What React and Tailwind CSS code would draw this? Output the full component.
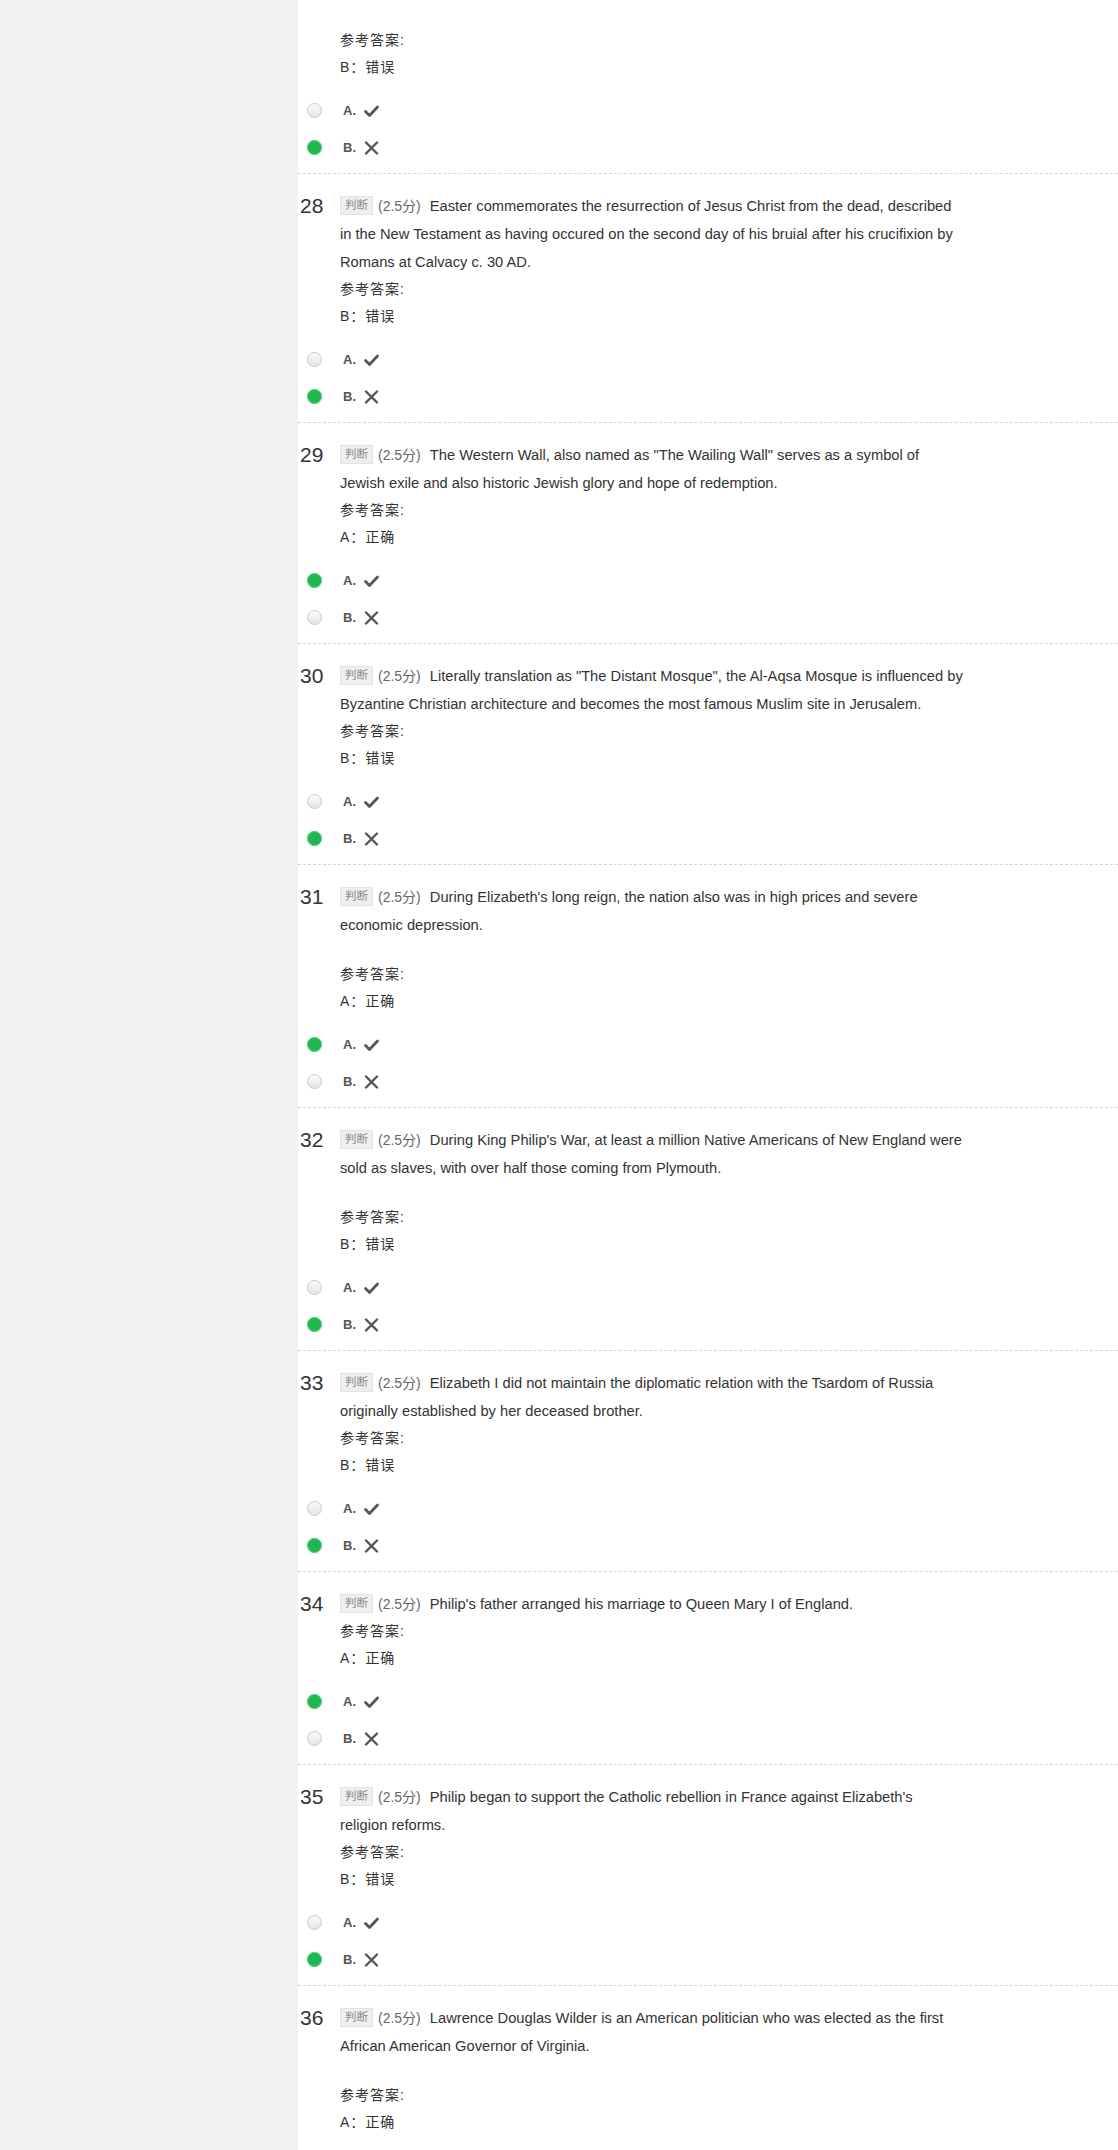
import React from "react";

const questions = [
  {
    n: 28,
    lines: [
      "Easter commemorates the resurrection of Jesus Christ from the dead, described",
      "in the New Testament as having occured on the second day of his bruial after his crucifixion by",
      "Romans at Calvacy c. 30 AD.",
    ],
    ans: "B：错误",
    sel: "B",
  },
  {
    n: 29,
    lines: [
      'The Western Wall, also named as "The Wailing Wall" serves as a symbol of',
      "Jewish exile and also historic Jewish glory and hope of redemption.",
    ],
    ans: "A：正确",
    sel: "A",
  },
  {
    n: 30,
    lines: [
      'Literally translation as "The Distant Mosque", the Al-Aqsa Mosque is influenced by',
      "Byzantine Christian architecture and becomes the most famous Muslim site in Jerusalem.",
    ],
    ans: "B：错误",
    sel: "B",
  },
  {
    n: 31,
    lines: [
      "During Elizabeth's long reign, the nation also was in high prices and severe",
      "economic depression.",
    ],
    blank: true,
    ans: "A：正确",
    sel: "A",
  },
  {
    n: 32,
    lines: [
      "During King Philip's War, at least a million Native Americans of New England were",
      "sold as slaves, with over half those coming from Plymouth.",
    ],
    blank: true,
    ans: "B：错误",
    sel: "B",
  },
  {
    n: 33,
    lines: [
      "Elizabeth I did not maintain the diplomatic relation with the Tsardom of Russia",
      "originally established by her deceased brother.",
    ],
    ans: "B：错误",
    sel: "B",
  },
  {
    n: 34,
    lines: ["Philip's father arranged his marriage to Queen Mary I of England."],
    ans: "A：正确",
    sel: "A",
  },
  {
    n: 35,
    lines: [
      "Philip began to support the Catholic rebellion in France against Elizabeth's",
      "religion reforms.",
    ],
    ans: "B：错误",
    sel: "B",
  },
  {
    n: 36,
    lines: [
      "Lawrence Douglas Wilder is an American politician who was elected as the first",
      "African American Governor of Virginia.",
    ],
    blank: true,
    ans: "A：正确",
    sel: null,
    last: true,
  },
];

function Radio({ checked }) {
  return checked ? (
    <span className="block w-[15px] h-[15px] rounded-full bg-[#1fb850] border border-[#5fcf83] shadow-[0_0_1px_#8fe0a8]" />
  ) : (
    <span className="block w-[15px] h-[15px] rounded-full border border-[#c9c9c9] bg-gradient-to-b from-[#fbfbfb] to-[#e4e4e4]" />
  );
}

function CheckIcon() {
  return (
    <svg width="17" height="14" viewBox="0 0 17 14" className="block">
      <polyline
        points="2.5,7.5 6.5,11.5 14.5,3"
        fill="none"
        stroke="#555"
        strokeWidth="2.8"
        strokeLinecap="round"
        strokeLinejoin="round"
      />
    </svg>
  );
}

function XIcon() {
  return (
    <svg width="15" height="14" viewBox="0 0 15 14" className="block">
      <path
        d="M2 1.5 L13 12.5 M13 1.5 L2 12.5"
        fill="none"
        stroke="#555"
        strokeWidth="2.4"
        strokeLinecap="round"
      />
    </svg>
  );
}

function Options({ sel }) {
  return (
    <div className="mt-[11px]">
      <div className="flex items-center h-[37px]">
        <div className="ml-[9px] w-[15px]">
          <Radio checked={sel === "A"} />
        </div>
        <span className="ml-[21px] text-[13px] font-bold text-[#555]">A.</span>
        <span className="ml-[7px]">
          <CheckIcon />
        </span>
      </div>
      <div className="flex items-center h-[37px]">
        <div className="ml-[9px] w-[15px]">
          <Radio checked={sel === "B"} />
        </div>
        <span className="ml-[21px] text-[13px] font-bold text-[#555]">B.</span>
        <span className="ml-[8px]">
          <XIcon />
        </span>
      </div>
    </div>
  );
}

function Answer({ ans }) {
  return (
    <div className="pl-[42px] text-[14px] leading-[27px] text-[#333] tracking-[1px]">
      <div>参考答案:</div>
      <div>{ans}</div>
    </div>
  );
}

function Question({ q }) {
  return (
    <div
      className={
        q.last
          ? "pt-[18px]"
          : "border-b border-dashed border-[#d6d6d6] pt-[18px] pb-[7px]"
      }
    >
      <div className="flex">
        <div className="w-[42px] shrink-0 pl-[2px] text-[21px] leading-[28px] text-[#333]">
          {q.n}
        </div>
        <div className="text-[14.7px] leading-[28px] text-[#333] whitespace-nowrap">
          <span className="inline-block align-middle h-[19px] px-[4px] leading-[17px] text-[11.5px] text-[#8a8a8a] bg-[#efefef] border border-[#e2e2e2] -mt-[3px]">
            判断
          </span>
          <span className="ml-[5px] text-[14px] text-[#666]">(2.5分)</span>
          <span className="ml-[9px]">{q.lines[0]}</span>
          {q.lines.slice(1).map((l, i) => (
            <div key={i}>{l}</div>
          ))}
        </div>
      </div>
      {q.blank && <div className="h-[22px]" />}
      <Answer ans={q.ans} />
      {!q.last && <Options sel={q.sel} />}
    </div>
  );
}

export default function App() {
  return (
    <div className="flex min-h-screen bg-white font-['Liberation_Sans','Noto_Sans_CJK_SC',sans-serif]">
      <div className="w-[298px] shrink-0 bg-[#f1f1f1]" />
      <div className="flex-1">
        <div className="border-b border-dashed border-[#d6d6d6] pt-[27px] pb-[7px]">
          <Answer ans="B：错误" />
          <Options sel="B" />
        </div>
        {questions.map((q) => (
          <Question key={q.n} q={q} />
        ))}
      </div>
    </div>
  );
}
